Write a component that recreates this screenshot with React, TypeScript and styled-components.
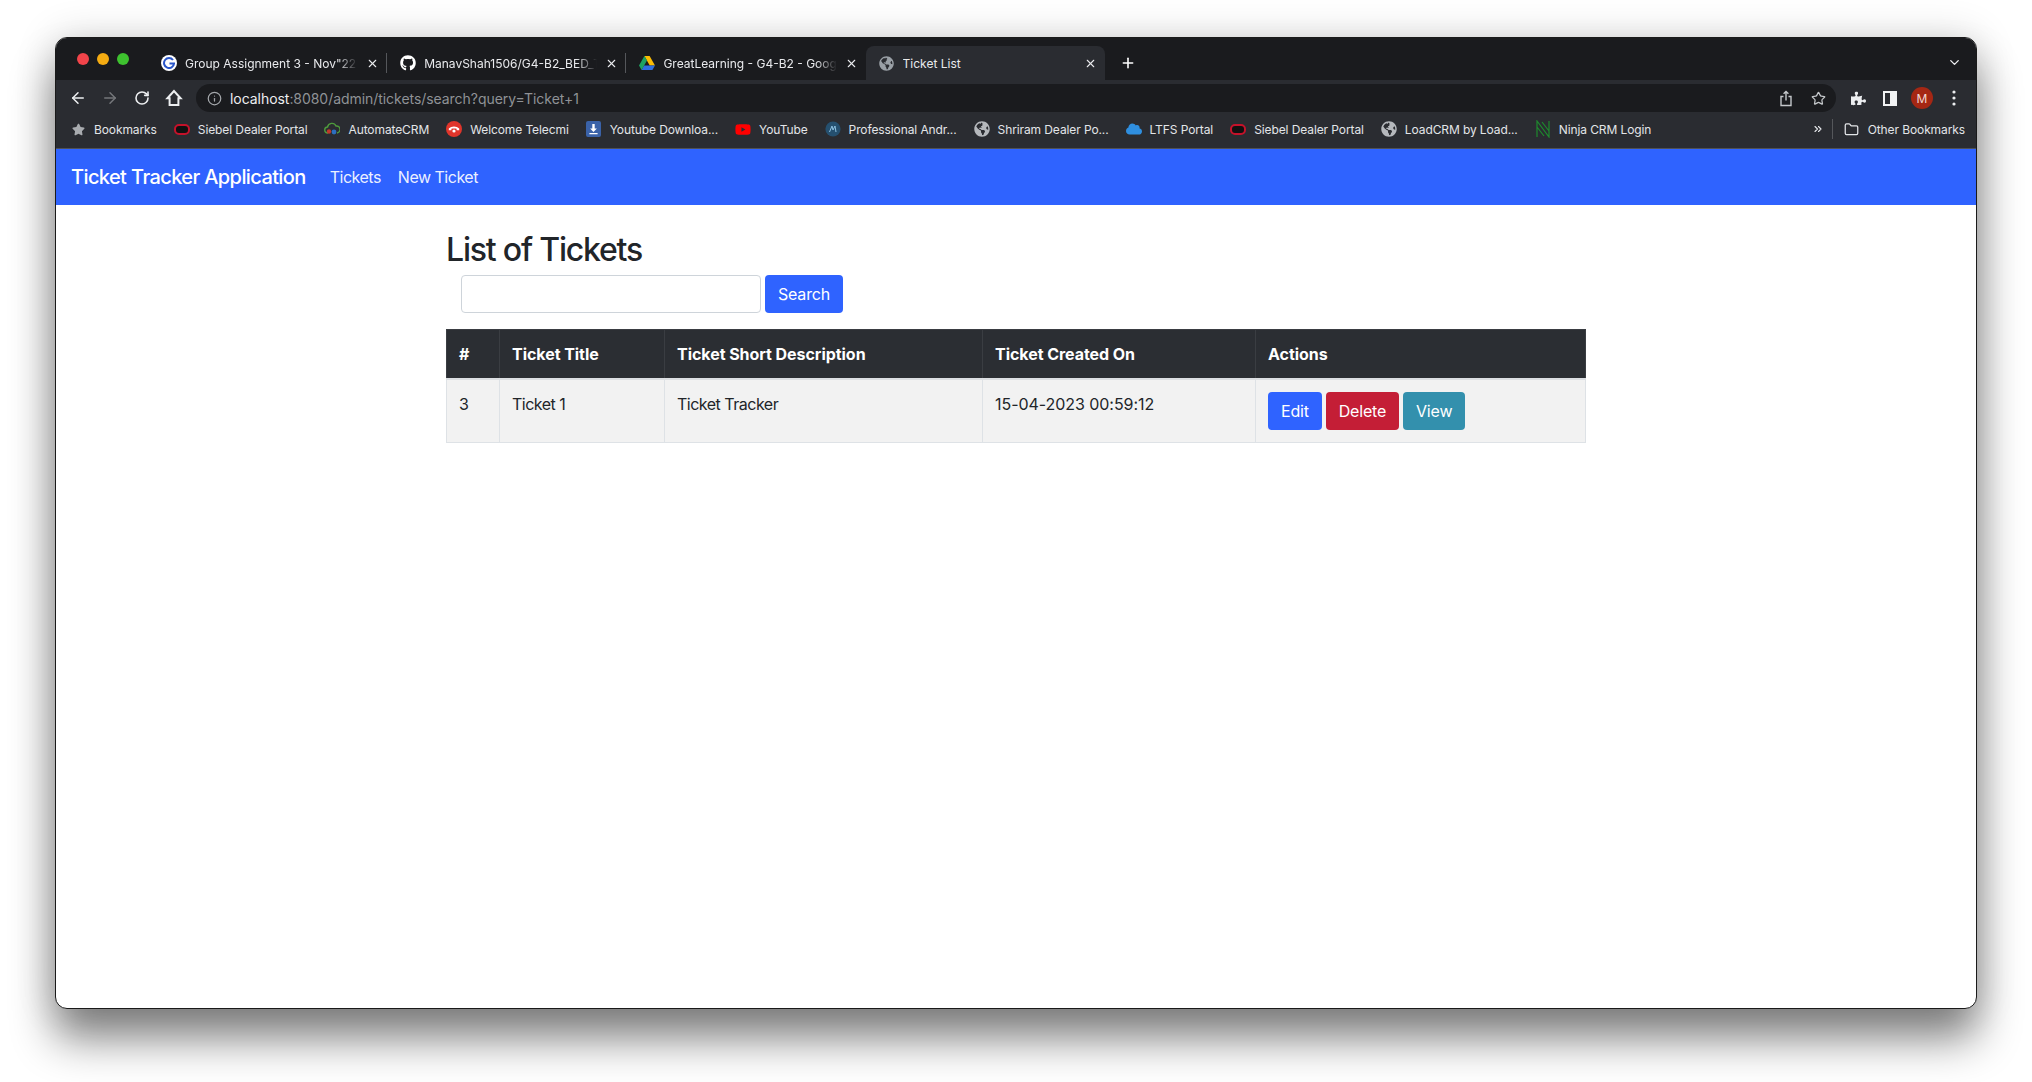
import React from "react";
import styled, { createGlobalStyle } from "styled-components";
import { ArrowLeft, ArrowRight, RotateCw, Info, Star, X, Plus, ChevronDown, ChevronsRight, Folder } from "lucide-react";
import { FaGithub, FaGlobeAmericas, FaStar, FaPuzzlePiece, FaYoutube, FaCloud } from "react-icons/fa";

const Global = createGlobalStyle`
  html, body { margin: 0; padding: 0; background: #fff; width: 2032px; height: 1082px; overflow: hidden; }
  body { font-family: Inter, "Liberation Sans", sans-serif; }
  * { box-sizing: border-box; }
`;

const Stage = styled.div`
  width: 2032px;
  height: 1082px;
  padding: 37px 55px 73px 55px;
`;

const Window = styled.div`
  width: 1922px;
  height: 972px;
  border-radius: 12px;
  overflow: hidden;
  background: #fff;
  border: 1px solid #1a1a1a;
  box-shadow: 0 30px 44px rgba(0, 0, 0, 0.48), 0 0 40px rgba(0, 0, 0, 0.16);
  display: flex;
  flex-direction: column;
`;

const TabStrip = styled.div`
  height: 42px;
  flex: none;
  background: #1a1b1e;
  display: flex;
  align-items: flex-end;
  padding-left: 92px;
  position: relative;
  color: #e9eaed;
`;

const Lights = styled.div`
  position: absolute;
  left: 21px;
  top: 15px;
  display: flex;
  gap: 8px;
`;

const Light = styled.span<{ $color: string }>`
  width: 12px;
  height: 12px;
  border-radius: 50%;
  background: ${(p) => p.$color};
`;

const Tab = styled.div<{ $active?: boolean }>`
  width: 239.2px;
  height: 34px;
  display: flex;
  align-items: center;
  padding: 0 8px 0 13px;
  gap: 8px;
  font-size: 12px;
  position: relative;
  border-radius: 8px 8px 0 0;
  background: ${(p) => (p.$active ? "#2a2c31" : "transparent")};
`;

const TabSep = styled.span`
  width: 1px;
  height: 20px;
  background: #55575b;
  position: absolute;
  right: 0;
  top: 7px;
`;

const TabIcon = styled.span`
  width: 16px;
  height: 16px;
  flex: none;
  display: flex;
  align-items: center;
  justify-content: center;
  color: #9aa0a6;
`;

const WhiteDisc = styled(TabIcon)`
  background: #fff;
  border-radius: 50%;
`;

const TabLabel = styled.span<{ $fade?: boolean }>`
  flex: 1;
  min-width: 0;
  white-space: nowrap;
  overflow: hidden;
  ${(p) => p.$fade && "mask-image: linear-gradient(90deg, #000 88%, transparent 100%);"}
`;

const NewTab = styled.span`
  margin-left: 15px;
  height: 34px;
  display: flex;
  align-items: center;
  color: #fff;
`;

const TabChevron = styled.span`
  position: absolute;
  right: 14px;
  top: 17px;
  color: #e9eaed;
  display: flex;
`;

const Toolbar = styled.div`
  height: 33px;
  flex: none;
  background: #2a2c31;
  display: flex;
  align-items: flex-start;
  padding: 4px 0 0 12px;
  color: #e2e4e7;
`;

const ToolButton = styled.span<{ $dim?: boolean }>`
  width: 20px;
  height: 28px;
  margin-right: 12px;
  display: flex;
  align-items: center;
  justify-content: center;
  flex: none;
  color: ${(p) => (p.$dim ? "#74767a" : "#eceef0")};
`;

const Omnibox = styled.div`
  width: 1640px;
  height: 28px;
  margin: 0 12px 0 0;
  background: #1a1b1e;
  border-radius: 14px;
  display: flex;
  align-items: center;
  padding: 0 8px 0 11px;
  flex: none;
`;

const Url = styled.div`
  margin-left: 8px;
  font-size: 14px;
  letter-spacing: -0.05px;
  color: #8f9296;
  flex: 1;
`;

const Host = styled.span`
  color: #eceef0;
`;

const OmniIcon = styled.span`
  width: 20px;
  height: 20px;
  margin-left: 12px;
  display: flex;
  align-items: center;
  justify-content: center;
  color: #c4c7ca;
`;

const SideIcon = styled.span`
  width: 14px;
  height: 15px;
  border: 2px solid #f2f3f4;
  border-right-width: 7px;
  display: block;
`;

const Avatar = styled.span`
  width: 22px;
  height: 22px;
  flex: none;
  border-radius: 50%;
  background: #a52714;
  color: #f2d9d4;
  font-size: 12px;
  display: flex;
  align-items: center;
  justify-content: center;
`;

const Bookmarks = styled.div`
  height: 36px;
  flex: none;
  background: #2a2c31;
  display: flex;
  align-items: center;
  padding: 0 0 3px 14px;
  gap: 17px;
  font-size: 12px;
  letter-spacing: -0.1px;
  color: #e3e5e8;
  border-bottom: 1px solid #4f5156;
  white-space: nowrap;
`;

const Bookmark = styled.span`
  display: flex;
  align-items: center;
  gap: 8px;
`;

const BookmarkIcon = styled.span`
  width: 16px;
  height: 16px;
  display: flex;
  align-items: center;
  justify-content: center;
  flex: none;
`;

const SiebelIcon = styled.span`
  width: 16px;
  height: 11px;
  border: 2px solid #c4122a;
  border-radius: 5px;
  background: #111;
`;

const Overflow = styled.span`
  margin-left: auto;
  margin-right: 11px;
  display: flex;
  align-items: center;
  color: #e3e5e8;
`;

const OverflowSep = styled.span`
  width: 1px;
  height: 20px;
  background: #55575b;
  margin: 0 11px 0 8px;
`;

const Navbar = styled.nav`
  height: 56px;
  flex: none;
  background: #2f63ff;
  display: flex;
  align-items: center;
  padding-left: 15px;
  color: #fff;
`;

const Brand = styled.a`
  font-size: 20px;
  font-weight: 500;
  letter-spacing: -0.6px;
  margin-right: 24px;
`;

const NavLink = styled.a`
  font-size: 16px;
  letter-spacing: -0.5px;
  margin-right: 17px;
  color: rgba(255, 255, 255, 0.92);
`;

const Main = styled.main`
  width: 1139px;
  margin-left: 390px;
  padding-top: 26px;
  color: #212529;
`;

const Title = styled.h2`
  margin: 0;
  font-size: 32px;
  font-weight: 500;
  line-height: 38px;
  letter-spacing: -1.2px;
  height: 44px;
`;

const SearchForm = styled.form`
  display: flex;
  gap: 4px;
  margin: 0 0 16px 15px;
`;

const SearchInput = styled.input`
  width: 300px;
  height: 38px;
  border: 1px solid #ced4da;
  border-radius: 4px;
  background: #fff;
`;

const Button = styled.button<{ $bg: string }>`
  height: 38px;
  padding: 0 13px;
  border: none;
  border-radius: 4px;
  background: ${(p) => p.$bg};
  color: #fff;
  font: 400 16px Inter, sans-serif;
  letter-spacing: -0.2px;
`;

const Table = styled.table`
  width: 1139px;
  border-collapse: collapse;
  table-layout: fixed;
  font-size: 16px;
  letter-spacing: -0.5px;
`;

const Th = styled.th<{ $w: number }>`
  width: ${(p) => p.$w}px;
  height: 49px;
  background: #2b2e33;
  color: #fff;
  font-weight: 700;
  letter-spacing: -0.05px;
  text-align: left;
  padding: 0 12px;
  border: 1px solid #3a3d42;
  border-bottom: 2px solid #dcdfe3;
`;

const Td = styled.td`
  height: 64px;
  background: #f2f2f2;
  padding: 12px;
  vertical-align: top;
  line-height: 24px;
  border: 1px solid #dee2e6;
`;

const DateCell = styled(Td)`
  letter-spacing: -0.05px;
`;

const Actions = styled.div`
  display: flex;
  gap: 4px;
`;

const Cols: [string, number][] = [
  ["#", 53],
  ["Ticket Title", 165],
  ["Ticket Short Description", 318],
  ["Ticket Created On", 273],
  ["Actions", 330],
];

const Globe = ({ size = 16, color = "#b5b8bc" }: { size?: number; color?: string }) => (
  <FaGlobeAmericas size={size} color={color} />
);

const DriveIcon = () => (
  <svg width="16" height="15" viewBox="0 0 16 15">
    <path d="M5.4 0h5.2L16 9.5h-5.3z" fill="#fbbc04" />
    <path d="M5 9.5h11L13.4 14H2.6z" fill="#2f6fe0" />
    <path d="M5.4 0L0 9.5 2.6 14l5.4-9.4z" fill="#1ea362" />
  </svg>
);

const AutomateIcon = () => (
  <svg width="16" height="14" viewBox="0 0 16 14">
    <path d="M4 11a3 3 0 0 1-.5-6A4.5 4.5 0 0 1 12 4a3.5 3.5 0 0 1 1 7" fill="none" stroke="#4e9a3c" strokeWidth="1.4" />
    <circle cx="5" cy="9.5" r="2.2" fill="#c0392b" />
    <circle cx="10" cy="10" r="2.4" fill="#2c6fbf" />
  </svg>
);

const TelecmiIcon = () => (
  <svg width="16" height="16" viewBox="0 0 16 16">
    <circle cx="8" cy="8" r="8" fill="#e0352b" />
    <path d="M2.8 7.6C5.5 4.9 10.5 4.9 13.2 7.6v1.6h-2.6V7.8c-1.5-.5-3.7-.5-5.2 0v1.4H2.8z" fill="#fff" />
    <circle cx="8" cy="10" r="1.6" fill="#fff" />
  </svg>
);

const DownloadIcon = () => (
  <svg width="15" height="16" viewBox="0 0 15 16">
    <rect width="15" height="16" rx="2" fill="#3a62a8" />
    <path d="M6.3 3h2.4v4.6h2.2L7.5 11 4.1 7.6h2.2zM3.4 12h8.2v1.3H3.4z" fill="#fff" />
  </svg>
);

const ProfIcon = () => (
  <svg width="16" height="16" viewBox="0 0 16 16">
    <circle cx="8" cy="8" r="7.6" fill="#25506f" />
    <path d="M4.5 11L7 5l1 4 2-4 1 6" fill="none" stroke="#8fc3e3" strokeWidth="1" />
  </svg>
);

const NinjaIcon = () => (
  <svg width="14" height="18" viewBox="0 0 14 18">
    <path d="M1 17V1l12 16V1M1 7l7 9M6 2l7 9" fill="none" stroke="#1e8a2e" strokeWidth="1.2" />
  </svg>
);

const Share = () => (
  <svg width="14" height="17" viewBox="0 0 14 17" fill="none" stroke="#c4c7ca" strokeWidth="1.4">
    <path d="M4.5 6.5H2v9h10v-9H9.5" />
    <path d="M7 10.5V1.5M4.6 3.8 7 1.4l2.4 2.4" />
  </svg>
);

const HomeGlyph = () => (
  <svg width="18" height="18" viewBox="0 0 18 18" fill="none" stroke="#eceef0" strokeWidth="2">
    <path d="M9 2 2.4 9.2H4.6V16h8.8V9.2h2.2z" strokeLinejoin="miter" />
  </svg>
);

const Dots = () => (
  <svg width="4" height="16" viewBox="0 0 4 16" fill="#eceef0">
    <circle cx="2" cy="2" r="1.6" />
    <circle cx="2" cy="8" r="1.6" />
    <circle cx="2" cy="14" r="1.6" />
  </svg>
);

const GLogo = () => (
  <svg width="12" height="12" viewBox="0 0 12 12" fill="none">
    <path d="M10 3A5 5 0 1 0 11 6.6H6.5" stroke="#2a56c9" strokeWidth="2" />
  </svg>
);

type Mark = { icon: React.ReactNode; label: string };

const marks: Mark[] = [
  { icon: <FaStar size={13} color="#a8abaf" />, label: "Bookmarks" },
  { icon: <SiebelIcon />, label: "Siebel Dealer Portal" },
  { icon: <AutomateIcon />, label: "AutomateCRM" },
  { icon: <TelecmiIcon />, label: "Welcome Telecmi" },
  { icon: <DownloadIcon />, label: "Youtube Downloa..." },
  { icon: <FaYoutube size={17} color="#f00" />, label: "YouTube" },
  { icon: <ProfIcon />, label: "Professional Andr..." },
  { icon: <Globe />, label: "Shriram Dealer Po..." },
  { icon: <FaCloud size={16} color="#2f8fe0" />, label: "LTFS Portal" },
  { icon: <SiebelIcon />, label: "Siebel Dealer Portal" },
  { icon: <Globe />, label: "LoadCRM by Load..." },
  { icon: <NinjaIcon />, label: "Ninja CRM Login" },
];

export default function App() {
  return (
    <Stage>
      <Global />
      <Window>
        <TabStrip>
          <Lights>
            <Light $color="#f2444a" />
            <Light $color="#f5ac12" />
            <Light $color="#3ec22f" />
          </Lights>
          <Tab>
            <WhiteDisc><GLogo /></WhiteDisc>
            <TabLabel $fade>Group Assignment 3 - Nov"22 - BED</TabLabel>
            <X size={13} />
            <TabSep />
          </Tab>
          <Tab>
            <TabIcon><FaGithub size={16} color="#fff" /></TabIcon>
            <TabLabel $fade>ManavShah1506/G4-B2_BED_Ticket</TabLabel>
            <X size={13} />
            <TabSep />
          </Tab>
          <Tab>
            <TabIcon><DriveIcon /></TabIcon>
            <TabLabel $fade>GreatLearning - G4-B2 - Google Drive</TabLabel>
            <X size={13} />
          </Tab>
          <Tab $active>
            <TabIcon><Globe size={15} color="#9aa0a6" /></TabIcon>
            <TabLabel>Ticket List</TabLabel>
            <X size={13} />
          </Tab>
          <NewTab><Plus size={16} strokeWidth={2.4} /></NewTab>
          <TabChevron><ChevronDown size={15} strokeWidth={2.2} /></TabChevron>
        </TabStrip>
        <Toolbar>
          <ToolButton><ArrowLeft size={18} /></ToolButton>
          <ToolButton $dim><ArrowRight size={18} /></ToolButton>
          <ToolButton><RotateCw size={16} strokeWidth={2.4} /></ToolButton>
          <ToolButton><HomeGlyph /></ToolButton>
          <Omnibox>
            <Info size={15} color="#a3a6aa" />
            <Url><Host>localhost</Host>:8080/admin/tickets/search?query=Ticket+1</Url>
            <OmniIcon><Share /></OmniIcon>
            <OmniIcon><Star size={15} /></OmniIcon>
          </Omnibox>
          <ToolButton><FaPuzzlePiece size={15} /></ToolButton>
          <ToolButton><SideIcon /></ToolButton>
          <ToolButton><Avatar>M</Avatar></ToolButton>
          <ToolButton><Dots /></ToolButton>
        </Toolbar>
        <Bookmarks>
          {marks.map((m, i) => (
            <Bookmark key={i}>
              <BookmarkIcon>{m.icon}</BookmarkIcon>
              {m.label}
            </Bookmark>
          ))}
          <Overflow>
            <ChevronsRight size={12} strokeWidth={2.2} />
            <OverflowSep />
            <Bookmark>
              <BookmarkIcon><Folder size={15} /></BookmarkIcon>
              Other Bookmarks
            </Bookmark>
          </Overflow>
        </Bookmarks>
        <Navbar>
          <Brand>Ticket Tracker Application</Brand>
          <NavLink>Tickets</NavLink>
          <NavLink>New Ticket</NavLink>
        </Navbar>
        <Main>
          <Title>List of Tickets</Title>
          <SearchForm>
            <SearchInput />
            <Button type="button" $bg="#2f63ff">Search</Button>
          </SearchForm>
          <Table>
            <thead>
              <tr>{Cols.map(([c, w]) => <Th key={c} $w={w}>{c}</Th>)}</tr>
            </thead>
            <tbody>
              <tr>
                <Td>3</Td>
                <Td>Ticket 1</Td>
                <Td>Ticket Tracker</Td>
                <DateCell>15-04-2023 00:59:12</DateCell>
                <Td>
                  <Actions>
                    <Button type="button" $bg="#2f63ff">Edit</Button>
                    <Button type="button" $bg="#c41e36">Delete</Button>
                    <Button type="button" $bg="#3390ad">View</Button>
                  </Actions>
                </Td>
              </tr>
            </tbody>
          </Table>
        </Main>
      </Window>
    </Stage>
  );
}
